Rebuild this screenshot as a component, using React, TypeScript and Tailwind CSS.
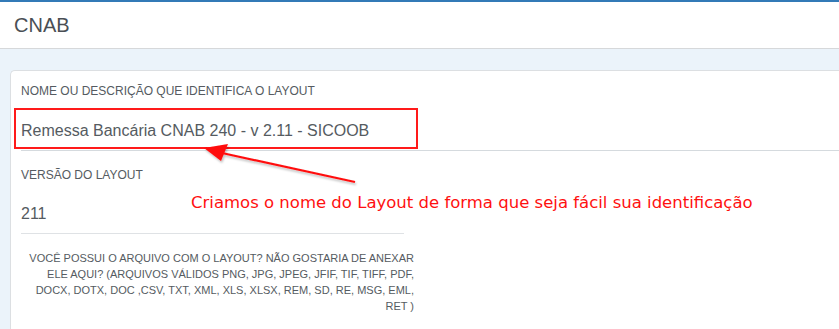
import React from "react";

export default function App() {
  return (
    <div className="w-[839px] h-[329px] overflow-hidden bg-[#ebf3fa] relative" style={{ fontFamily: '"Liberation Sans", Arial, sans-serif' }}>
      <div className="h-[2px] bg-[#337ab7]" />
      <div className="h-[47px] bg-white border-b border-[#d6d8da] flex items-center pl-[14px]">
        <span className="text-[20px] text-[#4a4f55]">CNAB</span>
      </div>
      <div className="pt-[21px] pl-[10px]">
        <div className="bg-white border-t border-l border-[#dcdfe2] rounded-tl-[5px] h-[300px] pl-[10px]">
          <div className="pt-[12px] text-[12px] text-[#555b61] leading-[16px]">NOME OU DESCRIÇÃO QUE IDENTIFICA O LAYOUT</div>
          <div className="mt-[12px] h-[40px] border-b border-[#d5dade] flex items-center text-[16px] text-[#555b61]">
            Remessa Bancária CNAB 240 - v 2.11 - SICOOB
          </div>
          <div className="w-[383px]">
            <div className="pt-[16px] text-[12px] text-[#555b61] leading-[16px]">VERSÃO DO LAYOUT</div>
            <div className="mt-[11px] h-[40px] border-b border-[#dfe2e5] flex items-center text-[16px] text-[#555b61]">211</div>
            <div className="mt-[16px] text-right text-[11px] leading-[16px] text-[#555b61] w-[393px]">
              VOCÊ POSSUI O ARQUIVO COM O LAYOUT? NÃO GOSTARIA DE ANEXAR ELE AQUI? (ARQUIVOS VÁLIDOS PNG, JPG, JPEG, JFIF, TIF, TIFF, PDF, DOCX, DOTX, DOC ,CSV, TXT, XML, XLS, XLSX, REM, SD, RE, MSG, EML, RET )
            </div>
          </div>
        </div>
      </div>
      <div className="absolute left-[14px] top-[108px] w-[404px] h-[41px] border-2 border-[#ff1a1a]" />
      <svg className="absolute left-0 top-0" width="839" height="329">
        <defs>
          <filter id="sh" x="-10%" y="-10%" width="120%" height="140%">
            <feDropShadow dx="1" dy="2" stdDeviation="1.2" floodColor="#000" floodOpacity="0.25" />
          </filter>
        </defs>
        <g filter="url(#sh)">
          <line x1="355" y1="182" x2="222" y2="153" stroke="#ff1010" strokeWidth="2.2" />
          <polygon points="204,148 228,144 221,161" fill="#ff1010" />
        </g>
      </svg>
      <div className="absolute left-[191px] top-[191px] text-[16.5px] leading-[24px] text-[#ff1010] whitespace-nowrap" style={{ fontFamily: '"DejaVu Sans", Verdana, sans-serif' }}>
        Criamos o nome do Layout de forma que seja fácil sua identificação
      </div>
    </div>
  );
}
